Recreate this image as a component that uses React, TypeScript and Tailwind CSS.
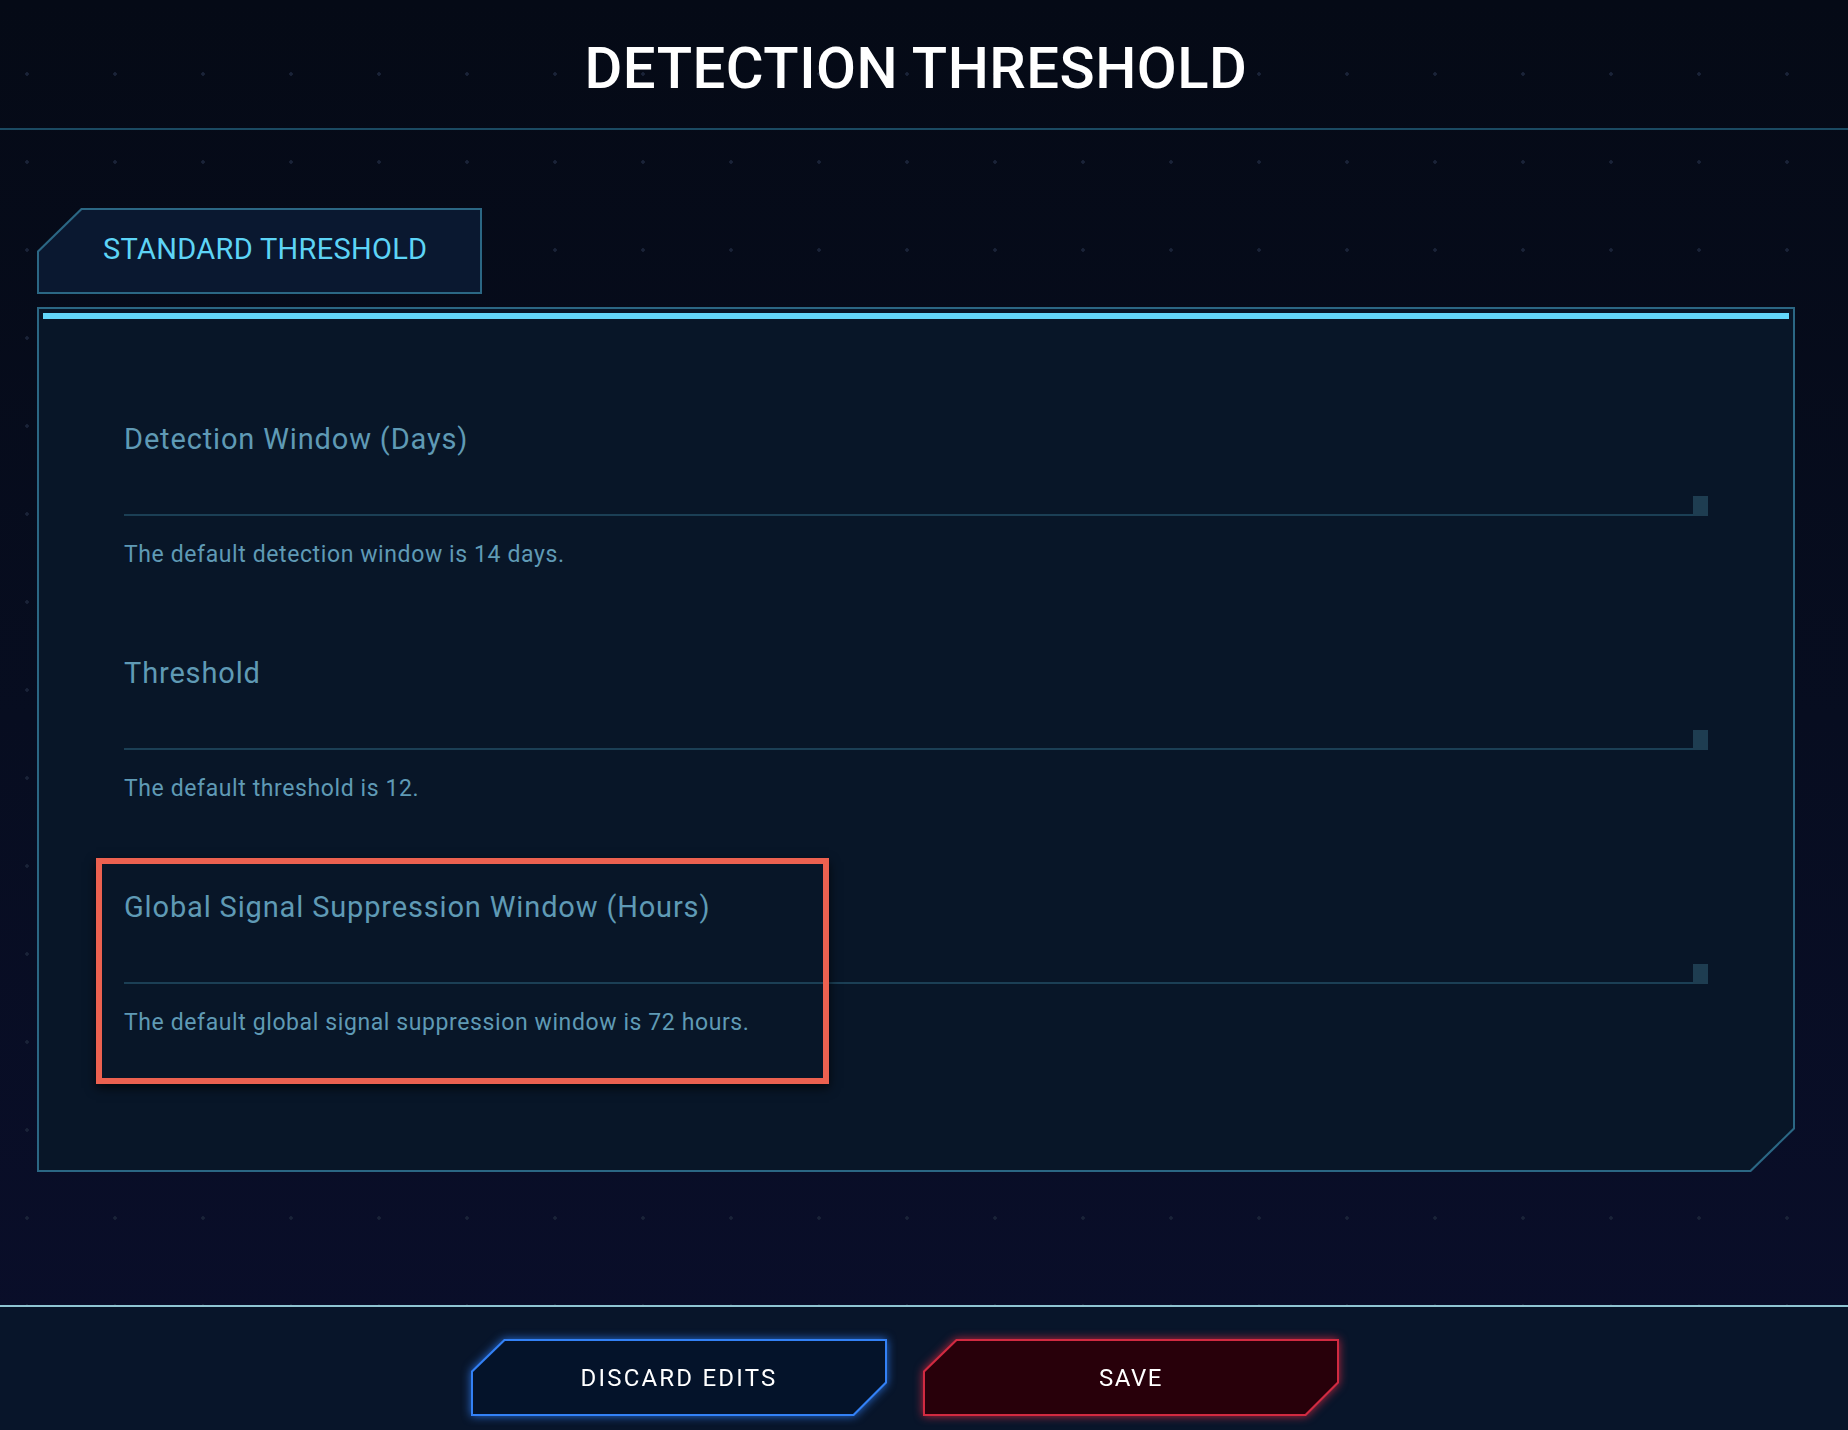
const fields = [
  { label: 'Detection Window (Days)', help: 'The default detection window is 14 days.' },
  { label: 'Threshold', help: 'The default threshold is 12.' },
  { label: 'Global Signal Suppression Window (Hours)', help: 'The default global signal suppression window is 72 hours.', flagged: true },
];

function Field({ label, help, flagged }: { label: string; help: string; flagged?: boolean }) {
  return (
    <div className="relative flex flex-col">
      <div className="h-[29px] text-[29px] leading-[29px] tracking-[0.85px] text-[#5f9ab5]">{label}</div>
      <div className="mt-[42px] flex items-end">
        <div className="h-[2px] flex-1 bg-[#1b3f55]" />
        <div className="h-[20px] w-[15px] bg-[#1e3d51]" />
      </div>
      <div className="mt-[27px] h-[23px] text-[23px] leading-[23px] tracking-[0.6px] text-[#5f9ab5]">{help}</div>
      {flagged && (
        <div className="pointer-events-none absolute -left-[28px] -top-[35px] h-[226px] w-[733px] border-[6px] border-[#ec6150] shadow-[0_4px_10px_rgba(0,0,0,0.7)]" />
      )}
    </div>
  );
}

export default function App() {
  return (
    <div className="min-h-screen w-full bg-[radial-gradient(circle,#1a2338_1.5px,transparent_2px),linear-gradient(180deg,#050a16_0%,#070d20_50%,#0a0e2b_100%)] bg-[length:88px_88px,100%_100%] bg-[position:-17px_30px,0_0] font-['Roboto','Liberation_Sans',sans-serif]">
      <header className="h-[130px] w-full border-b-2 border-[#1b4a62]">
        <div className="flex w-[1832px] justify-center pt-[39px]">
          <h1 className="text-[58px] leading-none font-medium tracking-[0.5px] text-white">DETECTION THRESHOLD</h1>
        </div>
      </header>

      <main className="flex w-[1832px] flex-col px-[37px] pt-[78px] pb-[133px]">
        <div className="h-[86px] w-[445px] bg-[#2b6784] p-[2px] [clip-path:polygon(44px_0,100%_0,100%_100%,0_100%,0_43px)]">
          <div className="flex h-full items-center bg-[#0a1830] pb-[4px] pl-[64px] [clip-path:polygon(43px_0,100%_0,100%_100%,0_100%,0_42px)]">
            <span className="text-[29px] leading-none tracking-[0.3px] text-[#5dd4f6]">STANDARD THRESHOLD</span>
          </div>
        </div>

        <div className="mt-[13px] bg-[#2b6784] p-[2px] [clip-path:polygon(0_0,100%_0,100%_calc(100%-43px),calc(100%-44px)_100%,0_100%)]">
          <div className="bg-[#081628] p-[4px] [clip-path:polygon(0_0,100%_0,100%_calc(100%-42px),calc(100%-43px)_100%,0_100%)]">
            <div className="h-[6px] bg-[#62d7fb]" />
            <div className="flex flex-col gap-[93px] px-[81px] pt-[106px] pb-[132px]">
              {fields.map((f) => (
                <Field key={f.label} {...f} />
              ))}
            </div>
          </div>
        </div>
      </main>

      <footer className="h-[127px] border-t-2 border-[#8fc4d2] bg-[#08152a]">
        <div className="flex w-[1832px] justify-center gap-[36px] pt-[32px] pr-[22px]">
          <div className="drop-shadow-[0_0_5px_rgba(47,124,245,0.85)]">
            <button className="h-[77px] w-[416px] bg-[#3381f6] p-[2px] [clip-path:polygon(33px_0,100%_0,100%_calc(100%-33px),calc(100%-33px)_100%,0_100%,0_32px)]">
              <div className="flex h-full items-center justify-center bg-[#04132a] [clip-path:polygon(32px_0,100%_0,100%_calc(100%-32px),calc(100%-32px)_100%,0_100%,0_31px)]">
                <span className="text-[24px] leading-none tracking-[2.2px] text-white">DISCARD EDITS</span>
              </div>
            </button>
          </div>
          <div className="drop-shadow-[0_0_5px_rgba(214,40,64,0.85)]">
            <button className="h-[77px] w-[416px] bg-[#d12a41] p-[2px] [clip-path:polygon(33px_0,100%_0,100%_calc(100%-33px),calc(100%-33px)_100%,0_100%,0_32px)]">
              <div className="flex h-full items-center justify-center bg-[#28000a] [clip-path:polygon(32px_0,100%_0,100%_calc(100%-32px),calc(100%-32px)_100%,0_100%,0_31px)]">
                <span className="text-[24px] leading-none tracking-[1.5px] text-white">SAVE</span>
              </div>
            </button>
          </div>
        </div>
      </footer>
    </div>
  );
}
